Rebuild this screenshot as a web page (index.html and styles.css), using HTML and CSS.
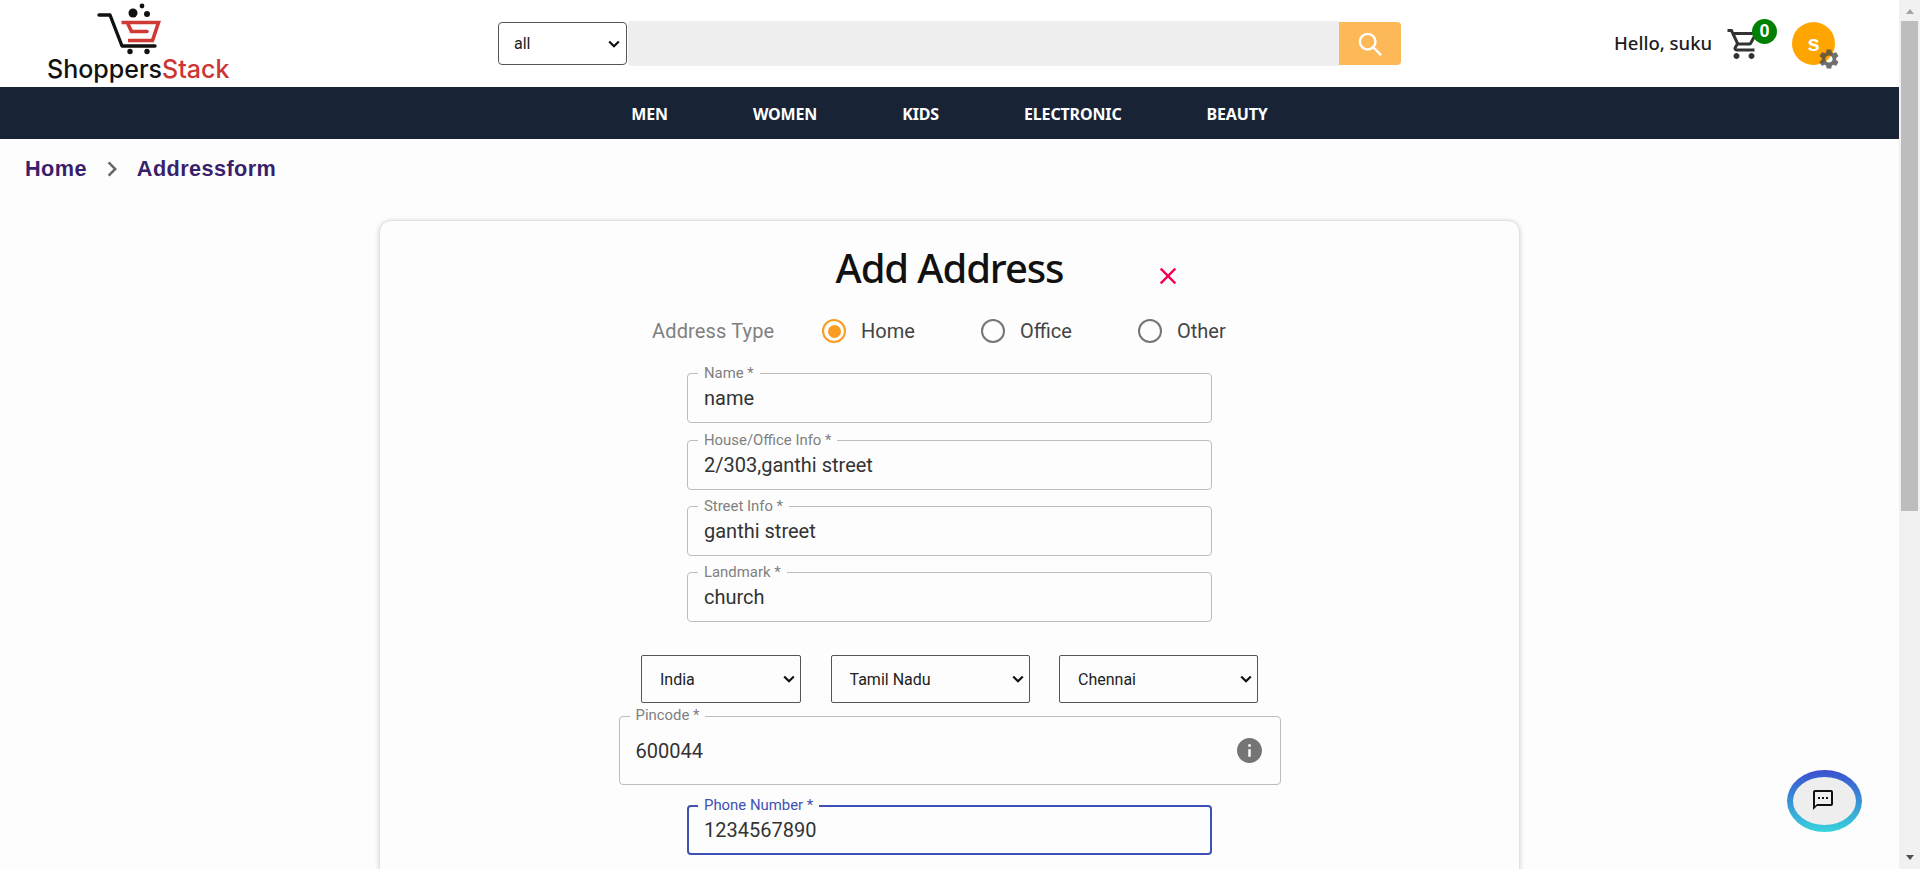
FILE: index.html
```html
<!DOCTYPE html>
<html lang="en">
<head>
<meta charset="utf-8">
<title>Add Address</title>
<link rel="stylesheet" href="styles.css">
</head>
<body>
<div class="app">
  <main class="page">
    <header class="topbar">
      <a class="logo">
        <svg class="logo-cart" viewBox="96 2 66 54" width="66" height="54">
          <path d="M99 15H110L122 46H155" fill="none" stroke="#111" stroke-width="3.4" stroke-linecap="round" stroke-linejoin="round"/>
          <path d="M121.5 22.500H158.500L152.500 40.500H128" fill="none" stroke="#cf3a36" stroke-width="3.6"/>
          <path d="M128 24L131.500 31.500H147" fill="none" stroke="#cf3a36" stroke-width="3.6" stroke-linecap="round"/>
          <circle cx="133" cy="13" r="4.500" fill="#111"/>
          <circle cx="147" cy="14" r="3" fill="#111"/>
          <circle cx="142" cy="6" r="2.400" fill="#111"/>
          <circle cx="130" cy="51.500" r="2.700" fill="#111"/>
          <circle cx="147" cy="51.500" r="2.700" fill="#111"/>
        </svg>
        <span class="logo-text">Shoppers<span class="logo-red">Stack</span></span>
      </a>
      <div class="search">
        <select class="search-cat"><option>all</option></select>
        <input class="search-input" type="text" aria-label="Search">
        <button class="search-btn" aria-label="Search">
          <svg viewBox="0 0 24 24" width="28" height="28"><circle cx="10" cy="10" r="6.700" fill="none" stroke="#fff" stroke-width="2"/><path d="M15 15l6.500 6.500" stroke="#fff" stroke-width="2" fill="none"/></svg>
        </button>
      </div>
      <div class="user">
        <span class="hello">Hello, suku</span>
        <span class="cart">
          <svg viewBox="0 0 24 24" width="36" height="36"><path fill="#333" d="M15.550 13c.75 0 1.410-.41 1.750-1.030l3.580-6.490c.37-.66-.11-1.480-.87-1.480H5.210l-.94-2H1v2h2l3.600 7.590-1.350 2.440C4.520 15.370 5.480 17 7 17h12v-2H7l1.100-2h7.450zM6.160 6h12.150l-2.760 5H8.530L6.160 6zM7 18c-1.100 0-1.990.9-1.990 2S5.900 22 7 22s2-.9 2-2-.9-2-2-2zm10 0c-1.100 0-1.990.9-1.990 2s.89 2 1.990 2 2-.9 2-2-.9-2-2-2z"/></svg>
          <span class="badge">0</span>
        </span>
        <span class="avatar">s
          <svg class="gear" viewBox="0 0 24 24" width="24" height="24"><path fill="rgba(70,70,70,.78)" d="M19.140 12.940c.04-.3.06-.61.06-.94 0-.32-.02-.64-.07-.94l2.030-1.580c.18-.14.23-.41.12-.61l-1.920-3.320c-.12-.22-.37-.29-.59-.22l-2.390.96c-.5-.38-1.030-.7-1.620-.94l-.36-2.540c-.04-.24-.24-.41-.48-.41h-3.840c-.24 0-.43.17-.47.41l-.36 2.540c-.59.24-1.130.57-1.620.94l-2.390-.96c-.22-.08-.47 0-.59.22L2.740 8.870c-.12.21-.08.47.12.61l2.030 1.580c-.05.3-.09.63-.09.94s.02.64.07.94l-2.030 1.580c-.18.14-.23.41-.12.61l1.920 3.320c.12.22.37.29.59.22l2.390-.96c.5.38 1.030.7 1.620.94l.36 2.540c.05.24.24.41.48.41h3.840c.24 0 .44-.17.47-.41l.36-2.540c.59-.24 1.130-.56 1.620-.94l2.390.96c.22.08.47 0 .59-.22l1.920-3.320c.12-.22.07-.47-.12-.61l-2.010-1.580zM12 15.600c-1.980 0-3.600-1.620-3.600-3.600s1.620-3.600 3.600-3.600 3.600 1.620 3.600 3.600-1.620 3.600-3.600 3.600z"/></svg>
        </span>
      </div>
    </header>

    <nav class="mainnav">
      <a>MEN</a><a>WOMEN</a><a>KIDS</a><a>ELECTRONIC</a><a>BEAUTY</a>
    </nav>

    <div class="crumbs">
      <a>Home</a>
      <svg viewBox="0 0 24 24" width="30" height="30"><path fill="#666" d="M10 6 8.590 7.410 13.170 12l-4.580 4.590L10 18l6-6z"/></svg>
      <a>Addressform</a>
    </div>

    <form class="card">
      <div class="card-head">
        <h1 class="card-title">Add Address</h1>
        <svg class="close" viewBox="0 0 24 24" width="28" height="28"><path fill="#f50057" d="M19 6.410 17.590 5 12 10.590 6.410 5 5 6.410 10.590 12 5 17.590 6.410 19 12 13.410 17.590 19 19 17.590 13.410 12z"/></svg>
      </div>

      <div class="types">
        <span class="types-label">Address Type</span>
        <label class="radio radio-home"><span class="dot dot-on"></span>Home</label>
        <label class="radio radio-office"><span class="dot"></span>Office</label>
        <label class="radio radio-other"><span class="dot"></span>Other</label>
      </div>

      <div class="field field-first"><span class="field-label">Name *</span><span class="field-value">name</span></div>
      <div class="field field-second"><span class="field-label">House/Office Info *</span><span class="field-value">2/303,ganthi street</span></div>
      <div class="field"><span class="field-label">Street Info *</span><span class="field-value">ganthi street</span></div>
      <div class="field"><span class="field-label">Landmark *</span><span class="field-value">church</span></div>

      <div class="places">
        <select class="place place-country"><option>India</option></select>
        <select class="place"><option>Tamil Nadu</option></select>
        <select class="place"><option>Chennai</option></select>
      </div>

      <div class="field field-pin"><span class="field-label">Pincode *</span><span class="field-value">600044</span>
        <svg class="info" viewBox="2 2 20 20" width="25" height="25"><path fill="#757575" d="M12 2C6.480 2 2 6.480 2 12s4.480 10 10 10 10-4.480 10-10S17.520 2 12 2zm1 15h-2v-6h2v6zm0-8h-2V7h2v2z"/></svg>
      </div>
      <div class="field field-phone"><span class="field-label">Phone Number *</span><span class="field-value">1234567890</span></div>

      <button class="save" type="button" aria-label="Save"></button>
    </form>
  </main>

  <div class="scrollbar">
    <span class="arrow arrow-up"></span>
    <span class="thumb"></span>
    <span class="arrow arrow-down"></span>
  </div>

  <button class="chat" aria-label="Chat">
    <svg viewBox="0 0 24 24" width="24" height="24"><path fill="#111" d="M20 2H4c-1.100 0-2 .9-2 2v18l4-4h14c1.100 0 2-.9 2-2V4c0-1.100-.9-2-2-2zm0 14H6l-2 2V4h16v12z"/><path fill="#111" d="M7 9h2v2H7zm4 0h2v2h-2zm4 0h2v2h-2z"/></svg>
  </button>
</div>
</body>
</html>
```
FILE: styles.css
```css
* { box-sizing: border-box; }
html, body { margin: 0; height: 869px; overflow: hidden; }
body { font-family: Roboto, "Liberation Sans", sans-serif; background: #fdfdfd; color: #333; }

.app { display: flex; height: 869px; position: relative; overflow: hidden; }
.page { flex: 1; min-width: 0; height: 869px; overflow: hidden; }

/* header */
.topbar { height: 87px; background: #fff; display: flex; align-items: flex-start; }
.logo { width: 182px; margin-left: 47px; padding-top: 2px; display: flex; flex-direction: column; height: 87px; flex: none; }
.logo-cart { margin-left: 49px; display: block; height: 54px; flex: none; }
.logo-text { font-family: Inter, "Noto Sans", sans-serif; font-weight: 500; font-size: 25px; line-height: 27px; color: #111; white-space: nowrap; }
.logo-red { color: #cc3533; }

.search { margin-left: 269px; margin-top: 21px; display: flex; align-items: center; height: 45px; flex: none; }
.search-cat { appearance: none; width: 129px; height: 43px; border: 1px solid #555; border-radius: 4px; padding-left: 15px; font: 16px Roboto, sans-serif; color: #222; background: #fff url("data:image/svg+xml,%3Csvg xmlns='http://www.w3.org/2000/svg' width='12' height='8'%3E%3Cpath d='M1.200 1.500L6 6.200l4.800-4.700' fill='none' stroke='%23111' stroke-width='2.200'/%3E%3C/svg%3E") no-repeat right 6px center; }
.search-input { width: 711px; height: 45px; margin-left: 1px; border: 0; background: #eee; border-radius: 3px 0 0 3px; outline: 0; }
.search-btn { width: 62px; height: 43px; border: 0; padding: 0; background: #fdb858; border-radius: 0 4px 4px 0; display: flex; align-items: center; justify-content: center; }

.user { margin-left: 213px; margin-top: 22px; display: flex; align-items: center; height: 43px; flex: none; }
.hello { width: 99px; font-family: "Noto Sans", sans-serif; font-size: 18.500px; line-height: 24px; margin-top: -2px; font-weight: 500; color: #1c1c1c; white-space: nowrap; }
.cart { position: relative; margin-left: 13px; width: 36px; height: 36px; display: block; }
.cart svg { display: block; }
.badge { position: absolute; left: 26px; top: -7px; width: 25px; height: 25px; border-radius: 50%; background: #008000; color: #fff; font: 700 18px/25px "Liberation Sans", sans-serif; text-align: center; }
.avatar { position: relative; margin-left: 30px; width: 43px; height: 43px; border-radius: 50%; background: #ffa500; color: #fff; font: 700 22px/44px "Liberation Sans", sans-serif; text-align: center; display: block; }
.gear { position: absolute; left: 25px; top: 25px; }

/* nav */
.mainnav { height: 52px; padding-top: 2px; background: #182436; display: flex; justify-content: center; align-items: center; gap: 85px; }
.mainnav a { color: #fff; font: 700 16px "Noto Sans", sans-serif; letter-spacing: -.15px; }

/* breadcrumb */
.crumbs { height: 58px; padding: 2px 0 0 25px; display: flex; align-items: center; gap: 10px; }
.crumbs a { color: #3a1f6b; font: 700 21.700px "Liberation Sans", sans-serif; letter-spacing: .4px; }

/* card */
.card { width: 1141px; height: 760px; margin: 23px 0 0 379px; background: #fdfdfd; border: 1px solid #e2e2e2; border-radius: 12px; box-shadow: 0 1px 5px rgba(0,0,0,.18); display: flex; flex-direction: column; align-items: center; }
.card-head { position: relative; width: 100%; height: 50px; margin-top: 22px; text-align: center; }
.card-title { margin: 0; font: 500 40px/50px "Noto Sans", sans-serif; letter-spacing: -1.100px; color: #111; }
.close { position: absolute; left: 774px; top: 19px; }

.types { width: 100%; height: 40px; margin-top: 18px; display: flex; align-items: center; padding-left: 272px; font-size: 20px; }
.types-label { width: 170px; color: #808080; letter-spacing: .15px; }
.radio { display: flex; align-items: center; color: #444; }
.dot { width: 24px; height: 24px; border-radius: 50%; border: 2px solid #757575; margin-right: 15px; position: relative; flex: none; }
.dot-on { border-color: #f99c20; }
.dot-on::after { content: ""; position: absolute; left: 3.500px; top: 3.500px; width: 13px; height: 13px; border-radius: 50%; background: #f99c20; }
.radio-home { width: 159px; }
.radio-office { width: 157px; }

.field { position: relative; width: 525px; height: 50px; margin-top: 16px; border: 1px solid #bdbdbd; border-radius: 4px; display: flex; align-items: center; padding: 0 16px; background: #fdfdfd; }
.field-first { margin-top: 22px; }
.field-second { margin-top: 17px; }
.field-label { position: absolute; left: 10px; top: -9px; padding: 0 6px; background: #fdfdfd; font-size: 14.900px; line-height: 16px; color: #808080; white-space: nowrap; }
.field-value { font-size: 20px; color: #333; margin-top: -1px; }

.places { display: flex; gap: 29.500px; margin-top: 33px; }
.place { appearance: none; width: 199px; height: 48px; border: 1px solid #555; border-radius: 2px; padding-left: 18px; font: 16px Roboto, sans-serif; color: #222; background: #fdfdfd url("data:image/svg+xml,%3Csvg xmlns='http://www.w3.org/2000/svg' width='12' height='8'%3E%3Cpath d='M1.200 1.500L6 6.200l4.800-4.700' fill='none' stroke='%23111' stroke-width='2.200'/%3E%3C/svg%3E") no-repeat right 5px center; }
.place-country { width: 160px; }

.field-pin { width: 662px; height: 69px; margin-top: 13px; }
.field-pin .field-value { margin-top: 0; }
.field-pin .field-label { top: -10px; }
.info { position: absolute; right: 18px; top: 21px; }

.field-phone { margin-top: 20px; border: 2px solid #3f51b5; padding: 0 15px; }
.field-phone .field-label { color: #3f51b5; left: 9px; top: -10px; }

.save { width: 147px; height: 44px; margin-top: 15px; border: 0; border-radius: 4px; background: #f57c00; flex: none; padding: 0; }

/* scrollbar */
.scrollbar { width: 21px; height: 869px; background: #f1f1f1; display: flex; flex-direction: column; align-items: center; flex: none; }
.arrow { width: 0; height: 0; border-left: 4.500px solid transparent; border-right: 4.500px solid transparent; flex: none; }
.arrow-up { border-bottom: 5px solid #a3a3a3; margin-top: 9px; }
.arrow-down { border-top: 5px solid #505050; margin-top: 344px; }
.thumb { width: 17px; height: 490px; background: #bdbdbd; margin-top: 7px; flex: none; }

/* chat bubble */
.chat { position: absolute; left: 1787px; top: 770px; width: 75px; height: 62px; border: 0; border-radius: 50%; padding: 0 4px 2px 0; background: linear-gradient(#3b4fd0, #38d3dc); display: flex; align-items: center; justify-content: center; }
.chat::before { content: ""; position: absolute; left: 6px; top: 7px; right: 6px; bottom: 7px; border-radius: 50%; background: #eee; }
.chat svg { position: relative; }
```
